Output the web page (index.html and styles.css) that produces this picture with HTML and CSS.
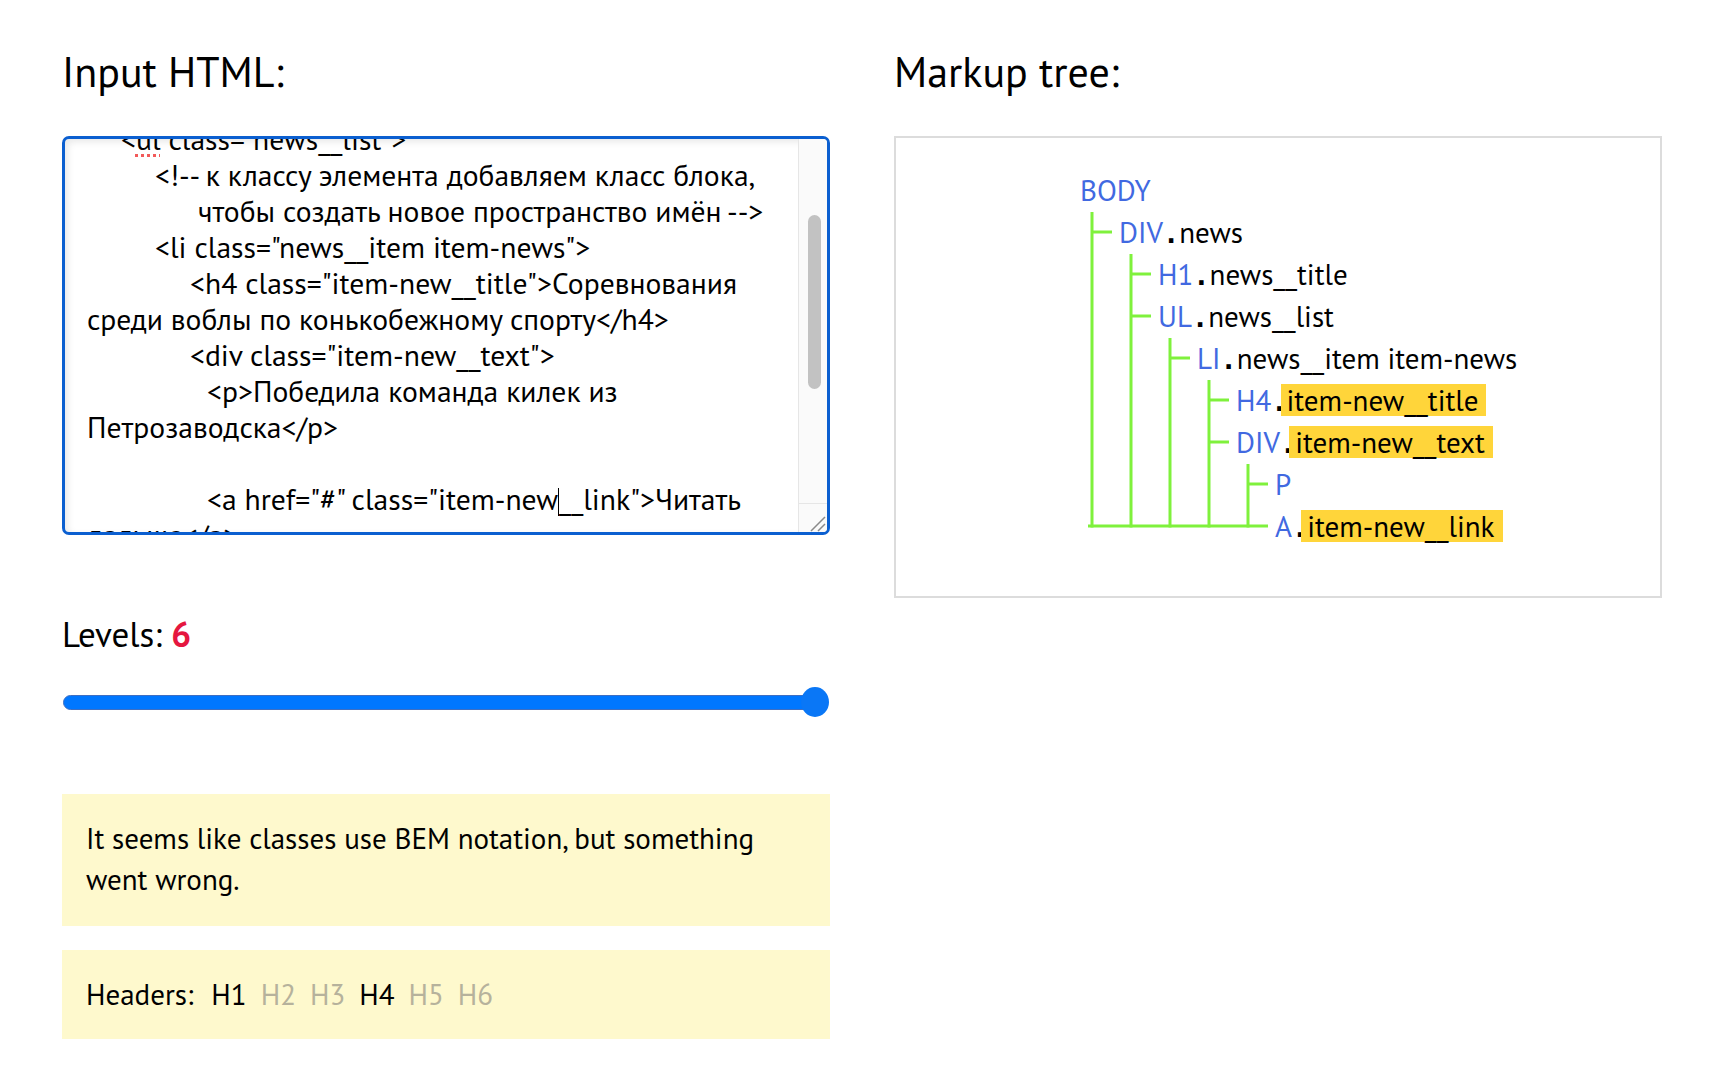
FILE: index.html
```html
<!DOCTYPE html>
<html lang="ru">
<head>
<meta charset="utf-8">
<title>BEM tree</title>
<link rel="stylesheet" href="styles.css">
</head>
<body>
<main class="page">
  <section class="col col-input">
    <h2 class="title">Input HTML:</h2>
    <div class="editor">
      <div class="editor-text">
        <div class="code-lines">
          <div class="ln ind1">&lt;<span class="typo">ul</span> class="news__list"&gt;</div>
          <div class="ln ind2">&lt;!-- к классу элемента добавляем класс блока,</div>
          <div class="ln ind3b">чтобы создать новое пространство имён --&gt;</div>
          <div class="ln ind2">&lt;li class="news__item item-news"&gt;</div>
          <div class="ln ind3">&lt;h4 class="item-new__title"&gt;Соревнования</div>
          <div class="ln">среди воблы по конькобежному спорту&lt;/h4&gt;</div>
          <div class="ln ind3">&lt;div class="item-new__text"&gt;</div>
          <div class="ln ind4">&lt;p&gt;Победила команда килек из</div>
          <div class="ln">Петрозаводска&lt;/p&gt;</div>
          <div class="ln">&nbsp;</div>
          <div class="ln ind4">&lt;a href="#" class="item-new<span class="caret"></span>__link"&gt;Читать</div>
          <div class="ln">дальше&lt;/a&gt;</div>
        </div>
      </div>
      <div class="editor-scroll">
        <div class="scroll-thumb"></div>
        <div class="resizer">
          <svg width="28" height="28" viewBox="0 0 28 28"><path d="M12 27 L26 13 M19 27 L26 20" stroke="#8a8a8a" stroke-width="1.5" fill="none"/></svg>
        </div>
      </div>
    </div>
    <div class="levels">Levels: <span class="levels-num">6</span></div>
    <div class="slider">
      <div class="slider-track"></div>
      <div class="slider-thumb"></div>
    </div>
    <div class="note note-msg"><p class="note-text">It seems like classes use BEM notation, but something went wrong.</p></div>
    <div class="note note-headers">
      <span class="hdr-label">Headers:</span>
      <span class="hdr on">H1</span>
      <span class="hdr">H2</span>
      <span class="hdr">H3</span>
      <span class="hdr on">H4</span>
      <span class="hdr">H5</span>
      <span class="hdr">H6</span>
    </div>
  </section>
  <section class="col col-tree">
    <h2 class="title">Markup tree:</h2>
    <div class="tree-box">
      <svg class="tree-lines" viewBox="0 0 764 458" width="764" height="458">
        <g stroke="#7ff13c" stroke-width="3" fill="none">
          <path d="M196 74 V389.5"/>
          <path d="M235 116 V389.5"/>
          <path d="M274 200 V389.5"/>
          <path d="M313 242 V389.5"/>
          <path d="M352 326 V389.5"/>
          <path d="M196 94 H216"/>
          <path d="M235 136 H255"/>
          <path d="M235 178 H255"/>
          <path d="M274 220 H294"/>
          <path d="M313 262 H333"/>
          <path d="M313 304 H333"/>
          <path d="M352 346 H372"/>
          <path d="M192 388 H372"/>
        </g>
      </svg>
      <ul class="tree">
        <li class="node lv0"><span class="tag">BODY</span></li>
        <li class="node lv1"><span class="tag">DIV</span><span class="dot">.</span>news</li>
        <li class="node lv2"><span class="tag">H1</span><span class="dot">.</span>news__title</li>
        <li class="node lv2"><span class="tag">UL</span><span class="dot">.</span>news__list</li>
        <li class="node lv3"><span class="tag">LI</span><span class="dot">.</span>news__item item-news</li>
        <li class="node lv4"><span class="tag">H4</span><span class="dot">.</span><span class="mark">item-new__title</span></li>
        <li class="node lv4"><span class="tag">DIV</span><span class="dot">.</span><span class="mark">item-new__text</span></li>
        <li class="node lv5"><span class="tag">P</span></li>
        <li class="node lv5"><span class="tag">A</span><span class="dot">.</span><span class="mark">item-new__link</span></li>
      </ul>
    </div>
  </section>
</main>
</body>
</html>
```

FILE: styles.css
```css
* { box-sizing: border-box; }
html, body { margin: 0; padding: 0; background: #fff; }
body {
  font-family: "PT Sans", Lato, "Noto Sans", sans-serif;
  color: #000;
}

.page {
  display: grid;
  grid-template-columns: 768px 768px;
  column-gap: 64px;
  padding: 0 62px;
}

.title {
  margin: 47px 0 39px;
  font-size: 42px;
  line-height: 50px;
  font-weight: 400;
}

/* editor */
.editor {
  display: flex;
  height: 399px;
  border: 3px solid #0b5fd0;
  border-radius: 7px;
  overflow: hidden;
  background: #fff;
  box-shadow: inset 3px 3px 7px rgba(0, 0, 0, 0.09);
}
.editor-text {
  flex: 1;
  overflow: hidden;
  padding-left: 22px;
}
.code-lines {
  margin-top: -18px;
  font-size: 29.6px;
  line-height: 36px;
}
.ln { white-space: pre; }
.ind1 { padding-left: 34px; }
.ind2 { padding-left: 68px; }
.ind3 { padding-left: 103px; }
.ind3b { padding-left: 111px; }
.ind4 { padding-left: 120px; }
.typo {
  text-decoration: underline dotted #f25a5a;
  text-decoration-thickness: 3px;
  text-underline-offset: 4px;
}
.caret {
  display: inline-block;
  width: 0;
  height: 28px;
  border-left: 1.5px solid #000;
  vertical-align: -6px;
}
.editor-scroll {
  width: 29px;
  flex: none;
  display: flex;
  flex-direction: column;
  border-left: 1px solid #e6e6e6;
  background: #fafafa;
}
.scroll-thumb {
  margin: 76px 0 0 9px;
  width: 13px;
  height: 174px;
  border-radius: 7px;
  background: #c2c2c2;
}
.resizer {
  margin-top: auto;
  height: 29px;
  border-top: 1px solid #e6e6e6;
}
.resizer svg { display: block; }

/* levels */
.levels {
  margin-top: 79px;
  font-size: 35px;
  line-height: 40px;
}
.levels-num { color: #e5173f; font-weight: 700; }

.slider {
  position: relative;
  margin-top: 33px;
  height: 30px;
  display: flex;
  align-items: center;
}
.slider-track {
  width: 754px;
  margin-left: 1px;
  height: 15px;
  border-radius: 8px;
  background: #0077ff;
  border: 1.5px solid #3f6fc2;
}
.slider-thumb {
  position: absolute;
  right: 1px;
  top: 0;
  width: 28px;
  height: 30px;
  border-radius: 50%;
  background: #0a77f6;
}

/* notes */
.note {
  background: #fef9cd;
  padding: 24px 24px 26px;
  font-size: 29px;
  line-height: 41px;
}
.note-msg { margin-top: 77px; }
.note-text { margin: 0; max-width: 700px; }
.note-headers {
  margin-top: 24px;
  padding: 24px 24px;
  display: flex;
  gap: 14px;
}
.hdr { color: #b6b29c; }
.hdr.on { color: #000; }
.hdr-label { margin-right: 4px; }

/* tree */
.tree-box {
  position: relative;
  height: 462px;
  border: 2px solid #dcdcdc;
}
.tree-lines {
  position: absolute;
  left: 0;
  top: 0;
}
.tree {
  position: relative;
  list-style: none;
  margin: 0;
  padding: 31px 0 0 0;
  font-size: 29px;
  line-height: 42px;
}
.node { white-space: nowrap; height: 42px; }
.lv0 { padding-left: 184px; }
.lv1 { padding-left: 223px; }
.lv2 { padding-left: 262px; }
.lv3 { padding-left: 301px; }
.lv4 { padding-left: 340px; }
.lv5 { padding-left: 379px; }
.tag { color: #4169e1; }
.dot { font-family: "DejaVu Sans Mono", monospace; font-weight: 700; font-size: 27px; }
.mark {
  display: inline-block;
  background: #ffd53a;
  line-height: 32px;
  padding: 0 8px 0 6px;
  margin-left: -7px;
}
```
